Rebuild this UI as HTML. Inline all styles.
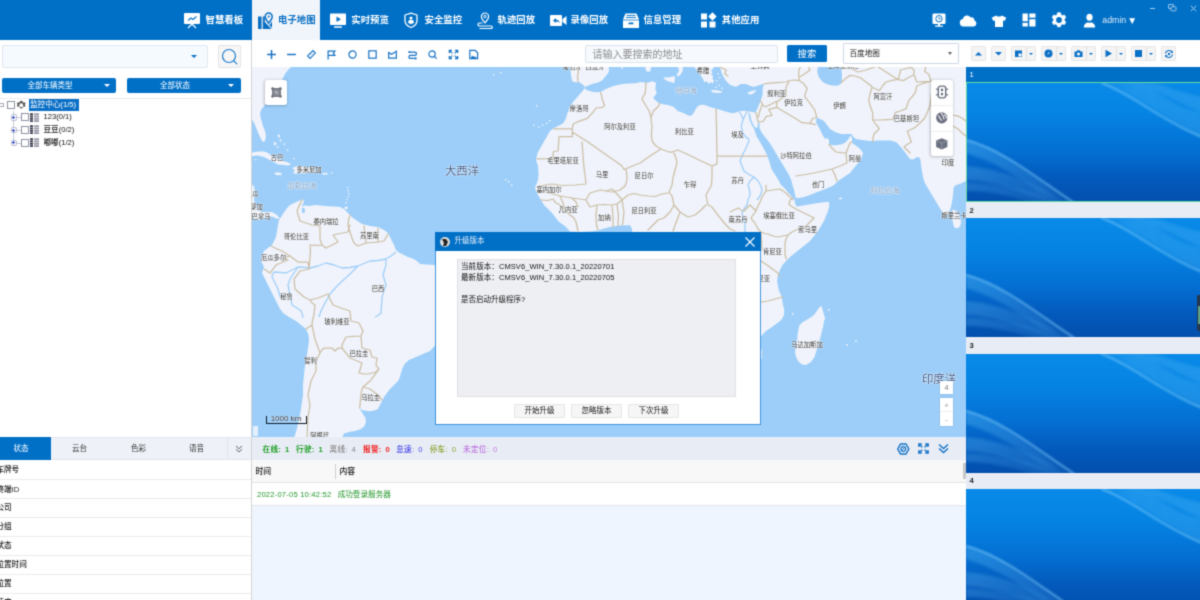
<!DOCTYPE html>
<html lang="zh-CN">
<head>
<meta charset="utf-8">
<title>CMSV6</title>
<style>
*{box-sizing:border-box;margin:0;padding:0}
html,body{width:1200px;height:600px;overflow:hidden;background:#fff}
body{font-family:"Liberation Sans","Noto Sans CJK SC",sans-serif;font-size:9.5px;color:#222;position:relative;-webkit-font-smoothing:antialiased}
.abs,#app *{position:absolute}
#app{position:absolute;left:0;top:0;width:1200px;height:600px;overflow:hidden;filter:url(#soft)}
.t{white-space:nowrap;line-height:12px;height:12px}
/* top bar */
#top{left:0;top:0;width:1200px;height:40px;background:#0070c7}
#tabact{left:252px;top:0;width:68px;height:40px;background:#f0f5fb}
.nav{top:14.4px;color:#fff;font-weight:bold;font-size:9.4px;letter-spacing:0}
.nav.on{color:#0a6fc2}
/* left */
#left{left:0;top:40px;width:251px;height:560px;background:#fff}
#lb{left:251px;top:40px;width:1px;height:560px;background:#d4d4d4}
.bbtn{top:78px;height:15px;background:#0070c7;border-radius:2px;color:#fff;font-size:7.5px;text-align:center;line-height:15px}
.tri{width:0;height:0;border-left:3px solid transparent;border-right:3px solid transparent;border-top:3.5px solid #fff}
.cb{width:8px;height:8px;border:1px solid #8e94a4;background:#fff}
.row{left:0;width:251px;height:1px;background:#ececec}
.rt{left:-3.6px;margin-top:0.9px;font-size:7.6px;color:#1a1a1a;font-weight:500}
/* map toolbar */
#mtb{left:252px;top:40px;width:714px;height:27px;background:#fff}
/* bottom */
#stat{left:252px;top:437px;width:714px;height:23px;background:#e8ecf5}
#th{left:252px;top:460px;width:714px;height:23px;background:#f8f8f8;border-bottom:1px solid #e4e4e4}
#tr{left:252px;top:483px;width:714px;height:23px;background:#fff;border-bottom:1px solid #e0e4ea}
#tb{left:252px;top:506px;width:714px;height:94px;background:#eef5fe}
/* right */
#right{left:965.5px;top:40px;width:234.5px;height:560px;background:#fff}
.vh{left:965.5px;width:234.5px;height:17px;background:#e8ecf5;color:#222;font-weight:bold;font-size:7.6px}
.vh span{left:4px;top:2.5px}
.vv{left:965.5px;width:234.5px;height:119px;overflow:hidden}
.rb{top:46px;height:15px;background:#f4f4f4;border:1px solid #e6e6e6;border-radius:1.5px}
.ml{white-space:nowrap;text-align:center;line-height:1.5;color:#333;text-shadow:0 0 1px #fff,0 0 1px #fff,0 0 2px #fff}
/* dialog */
#dlg{left:435px;top:232px;width:325.8px;height:193px;background:#fff;border:1px solid #3f93dd}
#dlgt{left:-1px;top:-1px;width:325.8px;height:19.3px;background:#0070c7}
#dlgb{left:21px;top:26px;width:278.7px;height:137.6px;background:#eeeff3;border:1px solid #e0e0e5}
.dbtn{top:171px;width:51px;height:14px;background:#f6f6f6;border:1px solid #e6e6e6;border-radius:1px;text-align:center;line-height:12px;font-size:7.5px;color:#111}
</style>
</head>
<body>
<svg width="0" height="0" style="position:absolute;left:0;top:0"><defs><filter id="soft" x="0" y="0" width="100%" height="100%" color-interpolation-filters="sRGB"><feConvolveMatrix order="3" kernelMatrix="0.0289 0.1122 0.0289 0.1122 0.4356 0.1122 0.0289 0.1122 0.0289" edgeMode="duplicate" preserveAlpha="true"/></filter></defs></svg>
<div id="app">
<!-- MAP -->
<div id="map" style="left:252px;top:67px;width:714px;height:370px;overflow:hidden;background:#9fcef9">
<svg style="left:0;top:0" width="714" height="370" viewBox="0 0 714 370">
<rect width="714" height="370" fill="#9ccef9"/>
<path fill="#f0f3fb" d="M0 0L39 0L36 3L33 7L31 11L28 17L22 25L16 33L12 39L9 43L8 47L9 52L11 59L13 64L14 69L13 74L11 75L9 72L7 68L5 63L3 58L1 54L0 53ZM0 118L2 119L3 125L2 133L4 139L6 143L10 145L20 145L25 148L28 152L24 151.5L20 149.5L14 150.5L8 152.5L3 152L0 150ZM27 153L31 147L33 144L36 140L38 138L44 135L48 133.5L50.5 132.5L52 134L51 137L49 139L53 138.5L57 139L64 138L73 139L82 139.5L88 140L92 142L95 145L98 148L101 151L104 153L110 157L118 159L126 160L132 163L136 166L139 172L142 178L144 183L147 185.5L150 187L156 190L162 192L166 195L168 197L175 197.5L182 198L193 201L203 208L208 218L210 228L206 243L200 258L193 271L184 277.5L178 284L171 287L164 290L157 293L153 296.5L150.5 301L149 306L147.5 311L146 314L142 318L138 322L135 326L132 330L130 334L129 336L127 340L126 342L122 343.5L118 344.3L114 343.8L110 343L107.5 341L109 344L111 347L113.5 351L114 355L112.5 359L109 362L103 364L97 365L92 366.5L90 371L42 371L44 365L45.5 359L46.5 354L48 348L49 342L50 335L51 328L51 318L52 308L53 298L54 293L55 288L56 281L57 274L56.5 268L54 262L49 258L44 254L37 250L31 246L27.5 241L26 238L23 232L20 226L17 220L14 214L12 210L10 206L11 203L12 200L10 196L9 192L10 188L12 184L16 181L20 178L22 174L24 170L25 164L26 158ZM318 0L714 0L714 114L710 116L706 117.5L703 118.5L701.5 121L701 128L700 135L699 140L697.5 144L695 148.5L693 148L691 146L689 143L686 138L683 133L680 128L677 123L674.5 119L672.5 115L671 110L670 104L669 98L668.5 93L667 90L664 90.5L661 92.5L658 92L655 88L652 84L648 79L644 75L638 73.6L628 73.5L618 74L610 73L604 72L601 69.5L599.5 67L594 67L590 67.2L584 65.5L578 62L575 58L572 54L568 52L564.5 50.5L564 55L566 59L568 62.5L570 67L573 72L575 71L577 73L577 76L578.5 78L584 78.3L590 77.2L594 75L596.5 72L598.5 68.5L600 71L600 76L603 78L606 80L609 83L611 86L609.5 91L606 96L602 101L598 106L592 110L586 114L582 118L576 121L568 124L563 126L558 128L552 130L546 131.3L543 130L542.5 132.5L543 136L544.5 139.5L548 139L554 138L560 137L566 136L572 135.3L577 134.8L577.3 139L576 144L574 149L572 154L569 159L566 164L562 169L558 174L553 178L548 182L543 186L538 190L534 194L530.5 198L528 203L526 208L525 214L526 219L527 224L529 228L530 232L531 238L532.3 243L532 248L530 252L528 254L524 257L520 260L517 262L514 264L511 267L509 269.5L507 274L508 280L509.8 283L509.8 291L507 295L498 313L488 333L468 351L438 353L408 313L388 263L393 213L388 183L380 164L380 162L378 158.3L368 158.5L360 159.5L352 161.5L346 163.5L338 164.5L328 165L318 164.5L314 160L310 157L306 154L303 150L300 146L296 142L292 138L289 133L286 128L284 124L283 120L284.5 117L286 113L286.5 107L286 99L284 93L285.5 86L290 78L294 71L298 64L302 61L307 58.5L311 56.5L313.5 52.5L315.5 46L318 40L321 35L324.5 31L328 27L331 23.5L332.7 21L332.7 19.6L330 17L327 15L323 15.3L320.5 14.5L319.5 11L319 8L318.5 4Z"/>
<path fill="#9ccef9" d="M50 141L52 140.5L53 143L52.5 146L50.5 146L49.8 143.5ZM332.5 20.4L334 19.4L340 17L346 15.5L350 13.5L353 10L355.5 7L357 4L356.7 -1L468 -1L468.7 3L470.5 8L472.5 11.5L474 13.7L476 16L478 17.7L481 19L484 19.7L486.5 18.5L488.7 17L494 17L497.5 18.5L500.7 19.7L504 19.3L507.3 18.3L510 17.3L512 17L511.2 19.5L510.7 21.7L510.7 27L509.7 30.5L508.7 33.7L507.3 37L506 40.3L504.5 43.5L503.3 45.7L499 44.8L495.3 44.3L491 43.8L487.3 44.3L484 45.6L480.7 46.3L476.5 45.3L472.7 44.3L468 42.8L464 41.7L457.3 39.7L453.5 38.2L450.7 37.7L447.5 38.3L445.3 39.7L443.5 42.5L442 45.5L440 48L438 49L435 47.8L432 46.3L428.5 45L425.3 43.7L423 41.3L421.3 39.7L418 38.5L414.7 37.7L411 37.2L407.3 36.3L405.5 35L404 33.7L402 32L401.5 30.3L403.5 28L404.7 25.7L403.8 23.5L403.3 21.7L403.8 19L404 16.3L402 14.8L400 14.3L397.5 15.3L394.7 15.7L391 15.2L388 15L385.5 16L382.7 16.3L376 16.6L370.7 17L366 18L361.3 19L357 20.7L353.3 22.3L350.5 24L348 25L344.5 25.3L341.3 25L337.5 24L334.7 23L333 21.6ZM496.7 45.3L498 46.5L499 52.3L501 57L503 60.5L505.3 61L505.8 57.5L506.2 54.8L507.3 55.5L507.5 59L507.8 62L510 66L512.7 69.7L515.5 73L519 78L522 83L525 88L528 93L531 98L534 103L537 108L539 112.5L540.5 118L542 123L543.2 128.5L543.3 131L542.3 132.5L540.5 131L538.5 128L536.5 126L534 123L531.5 120L529 118L527 114L524.5 110L522 106L519.5 102L517.5 95L515 88L512.5 83L510 78.5L508 75L506.3 72L504.7 69.7L503.5 66L502 61.7L499.8 58L498 54L496.8 50ZM566 -1L588.7 -1L589.5 3L590 8.3L589.8 13L589.3 16.3L587 18L584.7 18.7L580 18.5L576.7 17.7L573 16.3L570 14.3L567.5 11L566 8.3L565.3 4Z"/>
<path fill="#f0f3fb" d="M0 85.5L6 84.5L12 84.4L16 86L20 89L26 91.5L31 94L36 95.5L39 97L37 98.5L32 98L26 97.5L22 95L18 93L12 90L6 88.5L0 89ZM40 101L44 99.5L48 99L54 100L59 101.5L64 103.5L62 105.5L57 105L52 106.5L47 106L44 107L41 106L43 103.5ZM22 106L26 105.2L30 106.5L29 108.2L24 108ZM70 106L75 105.8L76.5 107.2L71 107.8ZM26 67L28 68.2L27.6 71L25.7 69.8ZM28 72L29.5 72.9L29.2 75L27.7 74.1ZM22 75L24.5 76.1L24 78.5L21.7 77.4ZM25 79L26.5 79.6L26.2 81L24.7 80.4ZM32 76L33.2 76.8L33 78.5L31.7 77.8ZM35 82L36.5 82.6L36.2 84L34.7 83.4ZM41 91L43 91.4L42.6 92.5L40.7 92.1ZM3 92L4.5 92.4L4.2 93.5L2.7 93.1ZM79 105.3L80.4 105.6L80.2 106.9L78.8 106.6ZM95 120L96.4 120.3L96.2 121.6L94.8 121.3ZM95.6 123L97 123.3L96.8 124.6L95.4 124.3ZM96.2 126L97.6 126.3L97.4 127.6L96 127.3ZM95.5 129L96.9 129.3L96.7 130.6L95.3 130.3ZM94.5 132L95.9 132.3L95.7 133.6L94.3 133.3ZM93.5 135L94.9 135.3L94.7 136.6L93.3 136.3ZM92.5 140L95.5 139.5L95.5 142L92.8 142.3ZM369 0.5L371 0.3L371.3 1.6L369.3 1.8ZM393.5 -1L398.5 -1L399 2L398 4.8L394.5 4.5L393.5 2ZM411.3 10.3L416 10.6L422.7 9L423 12L422 16.3L418.5 15L414.7 13.7L412.5 12ZM425.5 -1L430.5 -1L431 3L429.5 6L427.8 8.5L425.5 9.5L424.8 7.5L427 4L426.5 1.5ZM442 -1L462 -1L461 2L459 3L460.5 5.5L459 7L461 9L460.5 11.5L462 14L460.5 16.5L458.5 15L457 17L454.5 14L452.5 15.5L451 12L449 9L447.5 5.5L445 3L443 1ZM458.5 23.3L462 23L466 23.6L470 24.3L469.5 25.8L465 26L460.5 25.3ZM495.3 26L498 24.5L501.5 23.6L504.3 23L503 25L501 26.8L497.8 27.7ZM463.5 19.5L465 19.8L464.7 21.1L463.3 20.7ZM466.5 17.5L468 17.8L467.7 19.1L466.3 18.7ZM464 13L465.5 13.3L465.2 14.6L463.8 14.2ZM467 10L468.5 10.3L468.2 11.6L466.8 11.2ZM469.5 20.5L471 20.8L470.7 22.1L469.3 21.7ZM465.5 6L467 6.3L466.7 7.6L465.3 7.2ZM297 53L298.6 53.2L298.4 54.5L296.8 54.3ZM294 55.5L295.6 55.7L295.4 57L293.8 56.8ZM290 57.5L291.6 57.7L291.4 59L289.8 58.8ZM286 59.5L287.6 59.7L287.4 61L285.8 60.8ZM281 57.5L282.6 57.7L282.4 59L280.8 58.8ZM284 38L285.6 38.2L285.4 39.5L283.8 39.3ZM256 114L257.6 114.2L257.4 115.5L255.8 115.3ZM253 112L254.6 112.2L254.4 113.5L252.8 113.3ZM259 117.5L260.6 117.7L260.4 119L258.8 118.8ZM248 5L249.6 5.2L249.4 6.5L247.8 6.3ZM241 7L242.6 7.2L242.4 8.5L240.8 8.3ZM586.5 131L589 130.6L590.5 131.6L588 132.4ZM699.5 144.5L701.5 142.5L704 143.5L706.5 147L708.5 152L709 156.5L707.5 160L704.5 161.5L702 160L701 156L700 150ZM569.2 238.5L570.3 242L571.5 246L573.2 251.5L572 254L571.3 259L570 264L568.5 270L566.5 277L564.5 283.5L562.5 290L559 295L554 298L550 297.5L547 295L544.5 291L543 286L543.8 280L545 274L545.5 268L546.5 262L547.5 258L551 255L554.5 253L558.5 250.5L562 248L564.5 244.5L566.5 241.5ZM594.3 277L596.1 277.2L595.8 278.7L594.1 278.4ZM603.2 273.3L605 273.5L604.7 275L603 274.7ZM576 242L577.8 242.2L577.5 243.7L575.8 243.4ZM540 246L541.8 246.2L541.5 247.7L539.8 247.4Z"/>
<path fill="none" stroke="#a0cff9" stroke-width="1.3" stroke-linejoin="round" d="M144 185L139 189L134 192L126 193.5L118 194L112 196.5L106 199L98 200.5L90 201L82 198L74 196L66 199L58 201L52 200.3L46 200L40 203L34 206L28 205.3L22 205L20.5 207.5L20 210L23 216L26 222L27 226L28 230M46 200L42 206L38 212L37 215L36 218L38 228L40 238L45 241L49 244L50.5 248L51 251M106 199L102 203L98 207L92 212.5L86 218L82 222.5L78 227L75 232.5L72 238L69 244L67 250M134 192L134 198L132.5 203L131 208L132.5 213L134 218L132 224L130 230L129.5 238L129 246L126 248.5L123 250M487.3 44.5L489.5 48.5L491.3 52.3L490 56L489.3 59L490 63L491.3 67L494 70L496.7 72.3L497 74L494 81L490 89L488 94L490 99L492 104L497 107.5L502 110L498 114L496 118L497.5 123L498 128L496 133L495 138L492 142L490 146L491.5 152L493 158L493 165M495.3 44.5L493 48.5L491.3 52.3M502 110L506 114L509 119L510 124L508 129L505 133"/>
<path fill="none" stroke="#cbbfa5" stroke-width="1.25" stroke-linejoin="round" stroke-linecap="round" d="M326 -1L326.3 5L325.5 10L326 14.5M348.7 25.4L350.7 33.7L352.7 38.3L350.7 40.3L344 41L340.7 45.7L334.7 51.7L326.7 54.3L321.3 57L320.3 61.7M302 61.9L320.3 61.9L320.3 69.5L307 69.5L306.5 77L306 84L301.5 84.5L301 88L302 91.6L285 91.8M320.3 65L328 70L336 75L348 83.5L358 90.5L366 96L370 99L372 102.5L378 100L388 96L398 89L409 82M330 75L331 88L332 101L333.5 112L334 117L323 118L310 118.5L300 117L293 118L286 120M374 102.5L375 109L374.5 115L373 119L368 123L360 125L354 124M394 15.7L393.3 25.7L390 31.7L393.3 37.7L397.3 44.3L398.7 49.7L400 59L399.3 69.7L400.7 75L404 79L409 82L414 84L419 85.3L423 84L426 83M407.3 36.3L406.7 39L401.3 44.3L399.3 49.7M426 83L438 88.5L448 93.5L460 99M464 42L464.5 58L464.7 75L465 89M460 99L462 98.2L465 97L465 89L478 89L493 89L508 89L515 89M422 86L424 91L425 96L423 103L421 111L420 118L417 125L420 129M460 99L460 109L459.5 118L454 128L456 138L460 140L466 148L473 157L478 162L483 164M286 124.5L294 125L301 127L308 129L314 130L320 131L324 135L326 140M289 133L296 133.5L301 132L304 136L308 138L310 142M308 129L311 136L313 143L318 148L322 151L324 155L326 164M334 133L338 126L348 123L354 124L360 122L366 128L370 133L365 137L360 138L352 137.5L345 138L338 140L334 133M320 131L328 132L334 133M345 138L344 148L344.5 158L346 163M360 138L361 149L361 160M365 137L366.5 148L366 159M370 133L372 145L370.5 158M370 133L376 128L382 126.5L388 128L396 129L403 129.5L410 127L416 126M420 129L422 138L418 145L412 151L406 153L401 158L396 163M422 138L428 145L425 153L421 164M428 145L436 150L443 148L448 144L454 138M514 118L514 124L521 123L528 122L534 126L538 130L541 132.5M514 124L510 130L508 135L505 141L504 144L501 148L499 151L502 155L504 158L506 162L509 165L513 166.5L516 167L521 169L526 170L531 169L536 168L540 165L544 163L548 162L552 161L557 156L562 151L553 146.5L544 142L539 139L537 137L538 133L540 132M478 145L482 143L486 141L489 143L492 144L495 141L498 138L501 141L504 144M536 168L534 172L533 176L533 183L533 188L534.5 192M509 194L515 198L521 202.5L526 206L527 209M509 235L516 234L523 232L531 230M509 165L509.5 173L510 183M512 17L515.3 16.3L524.7 15.7L534 15L538 13.5L542 13L547.3 13.7M548.7 -1L547 3L546.7 5.7L547 10L547.3 13.7L551.3 16.3L555.3 21.7L553.5 26L552.7 29.7L558 36.3L562.7 43L564.7 50M536.7 15L534 20.3L534 28.3L524.7 35L524.7 40.3M510 37.7L514 39.7L524.7 34.3M524.7 40.3L516.7 42.3L520 48.3L514 49.7L511.3 54.3L506.7 55M524.7 40.3L531.3 44.3L544.7 52.3L550 55.7L558 56.3L560.7 51.5L564.5 50.5M558 56.3L563.5 57.7M504 45.5L505 50L506.2 55M508 33L510.5 37L509 41L507.5 45L506.5 50M544 109L553 107.5L562 106L571 104L580 102L588 99L595 96L594.5 91L594 86L589 85.6L584 85L580 81L577 77.5M580 102L583 108L585 114M594 86L596 81L598 76L600 75M589.3 15.5L593 12L598 8.3L603 9L608.7 11L614 15L619.3 19L620 20.3M620 20.3L618 27L616.7 33.7L618.5 40L620.7 45.7L620.7 53L624 57.5L627.3 61.7L624.5 64.5L622 67L621 71L620.7 75M620 20.3L627.3 23.7L630.5 19L634 15L640 13.3L646 12.3L651.3 13.7L656.5 10.5L662 7.7L663.5 11.5L664.7 15L671 14.7L678 14.3M678 14.3L671 16.5L664.7 19L663.3 25.7L660 30L656.7 33.7L654 41.7L648.5 44L643.3 45.7L640.7 52.3L630 52.8L620.7 53M679 31L678 39L675.5 45L672.7 51L668 56L663.3 60.3L659 62.5L655.3 64.3L657.5 70L659.3 75L655 77.5L652 80L655 83L658 86M624.7 -1L634 5L643.3 11L646 12.3L647.5 7.5L648.7 3L654 1.5L659.3 0.3L662 3L662 7.7M674 -1L672.7 4.3L674.5 6L676.7 7L678 11L679.3 15L680.5 20L679.5 26L679 31M701.3 48.3L704.5 48.7L707.3 49.7L710.5 51.5L714 54M701 59L706 62L710 66L714 69M598 -1L602 3L606 5L614 3L623 0M556 -1L558 3L554 6L551 8L547 10M468 0L474 3L473 7L476 9M50 133L47.5 138L45 144L46.5 149L48 154L54 156L60 158L64 158.5L68 159L68 165L68 172L69 175L70 178M70 178L64 178.3L58 178L58.5 184L58 190L57.5 196L57 202M70 178L74 181L80 178L86 175L83.5 171.5L81 168L88 166.5L96 165L97 161L98 158M98 148L96.5 153L96 158L97 162L98 165L100 171L102 176L106 179L110 177.5L114 176L120 175.5L126 175L132 174L134 170.5L136 167M112 159L113 167L114 176M126 161L126 168L126 175M19 179L24 181.5L30 184L34 186.5L38 189L32 191L36 193L30 195.5L24 198L21 202L18 206L15 204L12 202M38 189L42 192L46 195L51 195L56 195L57 202L52.5 203L48 204L45 208L42 212L42.5 217L43 222L47.5 226L52 230L55 231.5L58 233L60 236L63 238L62.5 243L62 248L60.5 253L60 258L57 260L54 262M58 233L66 231L76 227L78 232L81 238L89 241L98 244L98.5 249L99 254L103 255L107 256L109 260L111 264L110 266.5L109 269M60 258L61.5 265L63 272L65.5 279L68 286L70 283L72 281L76 281L80 281L83 284L86 281L90 281L90 278L92 274L94 270L101 269.3L109 269M68 286L66 290L64 294L64 299L64 304L61.5 309L59 314L57.5 321L56 328L57 333L58 338L57 344L56 350L55.5 360L55 371M90 281L94 286L98 291L104 293.5L110 296L108.5 301L107 306L111.5 306.8L116 307L120 306L124 305L125.5 303.5L127 302L125.5 300L124 298L124.5 294.5L125 291L122.5 290.5L120 290L119 286.5L118 283L114 282L110 281L109.5 275L109 269M127 302L122.5 308L118 314L114.5 317L111 320L114.5 321L118 322L122 325L126 328L128 330.5L130 333M111 320L110 323L109 326L108.5 332L108 338L107.5 341"/>
</svg>
<div class="ml" style="left:300.6px;top:-5.2px;width:38.9px;font-size:6.3px;color:#333;">葡萄牙</div>
<div class="ml" style="left:323.6px;top:-5.2px;width:38.9px;font-size:6.3px;color:#333;">西班牙</div>
<div class="ml" style="left:434.7px;top:-0.7px;width:32.6px;font-size:6.3px;color:#333;">希腊</div>
<div class="ml" style="left:307.6px;top:36.9px;width:38.9px;font-size:6.3px;color:#333;">摩洛哥</div>
<div class="ml" style="left:342.2px;top:55.3px;width:51.5px;font-size:6.3px;color:#333;">阿尔及利亚</div>
<div class="ml" style="left:412.9px;top:60.3px;width:38.9px;font-size:6.3px;color:#333;">利比亚</div>
<div class="ml" style="left:285.2px;top:88.7px;width:51.5px;font-size:6.3px;color:#333;">毛里塔尼亚</div>
<div class="ml" style="left:333.7px;top:102.7px;width:32.6px;font-size:6.3px;color:#333;">马里</div>
<div class="ml" style="left:372.6px;top:103.7px;width:38.9px;font-size:6.3px;color:#333;">尼日尔</div>
<div class="ml" style="left:421.7px;top:112.9px;width:32.6px;font-size:6.3px;color:#333;">乍得</div>
<div class="ml" style="left:505.2px;top:21.9px;width:38.9px;font-size:6.3px;color:#333;">叙利亚</div>
<div class="ml" style="left:522.1px;top:30.7px;width:38.9px;font-size:6.3px;color:#333;">伊拉克</div>
<div class="ml" style="left:571.3px;top:34.3px;width:32.6px;font-size:6.3px;color:#333;">伊朗</div>
<div class="ml" style="left:611.5px;top:24.7px;width:38.9px;font-size:6.3px;color:#333;">阿富汗</div>
<div class="ml" style="left:631.8px;top:46.7px;width:45.2px;font-size:6.3px;color:#333;">巴基斯坦</div>
<div class="ml" style="left:469.3px;top:63.3px;width:32.6px;font-size:6.3px;color:#333;">埃及</div>
<div class="ml" style="left:518.2px;top:83.9px;width:51.5px;font-size:6.3px;color:#333;">沙特阿拉伯</div>
<div class="ml" style="left:586.7px;top:87.3px;width:32.6px;font-size:6.3px;color:#333;">阿曼</div>
<div class="ml" style="left:679.7px;top:90.7px;width:32.6px;font-size:6.3px;color:#333;">印度</div>
<div class="ml" style="left:469.3px;top:109.3px;width:32.6px;font-size:6.3px;color:#333;">苏丹</div>
<div class="ml" style="left:549.7px;top:113.3px;width:32.6px;font-size:6.3px;color:#333;">也门</div>
<div class="ml" style="left:565.2px;top:-5.7px;width:51.5px;font-size:6.3px;color:#333;">土库曼斯坦</div>
<div class="ml" style="left:488.6px;top:-6.2px;width:38.9px;font-size:6.3px;color:#333;">土耳其</div>
<div class="ml" style="left:8.7px;top:86.3px;width:32.6px;font-size:6.3px;color:#333;">古巴</div>
<div class="ml" style="left:34.4px;top:97.9px;width:45.2px;font-size:6.3px;color:#333;">多米尼加</div>
<div class="ml" style="left:-28.6px;top:122.3px;width:45.2px;font-size:6.3px;color:#333;">尼加拉瓜</div>
<div class="ml" style="left:-30.8px;top:135.3px;width:51.5px;font-size:6.3px;color:#333;">哥斯达黎加</div>
<div class="ml" style="left:-10.4px;top:144.9px;width:38.9px;font-size:6.3px;color:#333;">巴拿马</div>
<div class="ml" style="left:51.4px;top:150.3px;width:45.2px;font-size:6.3px;color:#333;">委内瑞拉</div>
<div class="ml" style="left:21.8px;top:165.3px;width:45.2px;font-size:6.3px;color:#333;">哥伦比亚</div>
<div class="ml" style="left:97.9px;top:164.3px;width:38.9px;font-size:6.3px;color:#333;">苏里南</div>
<div class="ml" style="left:-1.0px;top:185.9px;width:45.2px;font-size:6.3px;color:#333;">厄瓜多尔</div>
<div class="ml" style="left:18.3px;top:224.9px;width:32.6px;font-size:6.3px;color:#333;">秘鲁</div>
<div class="ml" style="left:109.7px;top:217.3px;width:32.6px;font-size:6.3px;color:#333;">巴西</div>
<div class="ml" style="left:274.4px;top:117.9px;width:45.2px;font-size:6.3px;color:#333;">塞内加尔</div>
<div class="ml" style="left:296.6px;top:138.3px;width:38.9px;font-size:6.3px;color:#333;">几内亚</div>
<div class="ml" style="left:336.1px;top:145.9px;width:32.6px;font-size:6.3px;color:#333;">加纳</div>
<div class="ml" style="left:369.4px;top:139.3px;width:45.2px;font-size:6.3px;color:#333;">尼日利亚</div>
<div class="ml" style="left:501.2px;top:143.9px;width:51.5px;font-size:6.3px;color:#333;">埃塞俄比亚</div>
<div class="ml" style="left:536.1px;top:158.3px;width:38.9px;font-size:6.3px;color:#333;">索马里</div>
<div class="ml" style="left:500.9px;top:180.3px;width:38.9px;font-size:6.3px;color:#333;">肯尼亚</div>
<div class="ml" style="left:466.6px;top:147.7px;width:38.9px;font-size:6.3px;color:#333;">南苏丹</div>
<div class="ml" style="left:482.9px;top:206.7px;width:45.2px;font-size:6.3px;color:#333;">坦桑尼亚</div>
<div class="ml" style="left:679.4px;top:144.3px;width:45.2px;font-size:6.3px;color:#333;">斯里兰卡</div>
<div class="ml" style="left:62.4px;top:250.3px;width:45.2px;font-size:6.3px;color:#333;">玻利维亚</div>
<div class="ml" style="left:87.5px;top:282.3px;width:38.9px;font-size:6.3px;color:#333;">巴拉圭</div>
<div class="ml" style="left:42.3px;top:289.3px;width:32.6px;font-size:6.3px;color:#333;">智利</div>
<div class="ml" style="left:99.2px;top:326.3px;width:38.9px;font-size:6.3px;color:#333;">乌拉圭</div>
<div class="ml" style="left:48.2px;top:363.9px;width:38.9px;font-size:6.3px;color:#333;">阿根廷</div>
<div class="ml" style="left:529.2px;top:272.9px;width:51.5px;font-size:6.3px;color:#333;">马达加斯加</div>
<div class="ml" style="left:413.2px;top:18.9px;width:41.6px;font-size:7.2px;color:#7f9fc4;">地中海</div>
<div class="ml" style="left:608.6px;top:118.6px;width:48.8px;font-size:7.2px;color:#7f9fc4;">阿拉伯海</div>
<div class="ml" style="left:25.6px;top:113.6px;width:48.8px;font-size:7.2px;color:#7f9fc4;">加勒比海</div>
<div class="ml" style="left:182.9px;top:96.0px;width:54.2px;font-size:11.4px;color:#3a5585;">大西洋</div>
<div class="ml" style="left:659.9px;top:303.8px;width:54.2px;font-size:11.4px;color:#3a5585;">印度洋</div>
<div style="left:13.300px;top:12.700px;width:22px;height:25.300px;background:#fff;border-radius:2.500px;box-shadow:-0.500px 0.500px 3px rgba(0,0,0,.22)"></div>
<svg style="left:18.800px;top:19.800px" width="11" height="11" viewBox="0 0 10 10"><rect x="1.500" y="1.500" width="7" height="7" fill="#8a8d96" stroke="#70737c" stroke-width="1"/><circle cx="1.500" cy="1.500" r="1.300" fill="#6a6d76"/><circle cx="8.500" cy="1.500" r="1.300" fill="#6a6d76"/><circle cx="1.500" cy="8.500" r="1.300" fill="#6a6d76"/><circle cx="8.500" cy="8.500" r="1.300" fill="#6a6d76"/><path d="M3.800 4l2.400 1.800" stroke="#e8e8ec" stroke-width="0.900"/></svg>
<div style="left:679px;top:12.500px;width:22px;height:76.500px;background:#fff;border-radius:2.500px;box-shadow:-0.500px 0.500px 3px rgba(0,0,0,.22)"></div>
<div style="left:679px;top:37.500px;width:22px;height:1px;background:#eceef2"></div><div style="left:679px;top:64px;width:22px;height:1px;background:#eceef2"></div>
<svg style="left:683px;top:18px" width="14" height="14" viewBox="0 0 12 12"><rect x="2.800" y="1" width="6.400" height="10" rx="2" fill="#fff" stroke="#6b7080" stroke-width="1.200"/><circle cx="6" cy="4.200" r="1.100" fill="#6b7080"/><circle cx="6" cy="7.800" r="1.100" fill="#6b7080"/><path d="M0.800 3.200l2 0.800M0.800 8.800l2-0.800M11.200 3.200l-2 0.800M11.200 8.800l-2-0.800" stroke="#6b7080" stroke-width="1"/></svg>
<svg style="left:683.300px;top:43.800px" width="13.500" height="13.500" viewBox="0 0 12 12"><circle cx="6" cy="6" r="5" fill="#6b7080"/><path d="M2.500 4c1.500 0 2 3.500 3.500 4.500M5.500 1.500c1 2 2.500 3 2.500 6M8.500 2.500c0.500 2 1.500 2.500 2 4" stroke="#fff" stroke-width="0.900" fill="none"/></svg>
<svg style="left:683.300px;top:70px" width="13.500" height="13.500" viewBox="0 0 12 12"><path d="M6 1l5 2.200v5.600L6 11 1 8.800V3.200z" fill="#6b7080"/><path d="M1 3.200L6 5.400l5-2.200M6 5.400V11" stroke="#9aa0ad" stroke-width="0.700" fill="none"/></svg>
<div style="left:688px;top:313.500px;width:13px;height:13px;background:#fff;box-shadow:0 0 2px rgba(0,0,0,.15)"></div>
<div class="ml" style="left:688px;top:316px;width:13px;font-size:7px;color:#777">4</div>
<div style="left:688px;top:330.500px;width:13px;height:28px;background:#fff;box-shadow:0 0 2px rgba(0,0,0,.15)"></div>
<div style="left:688px;top:344px;width:13px;height:1px;background:#eceef2"></div>
<div class="ml" style="left:688px;top:333px;width:13px;font-size:8px;color:#999">+</div>
<div class="ml" style="left:688px;top:347px;width:13px;font-size:8px;color:#999">-</div>
<div class="ml" style="left:13.500px;top:346px;width:41px;font-size:8px;color:#1a2233;text-shadow:0 0 1px #fff,0 0 1px #fff">1000 km</div>
<div style="left:13.500px;top:349px;width:41px;height:8px;border:1.200px solid #111a2a;border-top:0"></div>
<div style="left:1px;top:359px;width:5px;height:10px;background:#e3f0fd"></div>
</div>

<!-- TOP BAR -->
<div id="top"></div>
<div id="tabact"></div>
<svg style="left:183.4px;top:12.2px" width="18" height="17" viewBox="0 0 18 17"><rect x="1" y="1" width="16" height="11" rx="1" fill="#fff"/><path d="M5 8.500l3-2.500 2 1.500 3.500-3" stroke="#0070c7" stroke-width="1.1" fill="none"/><path d="M9 12l-4 4M9 12l4 4" stroke="#fff" stroke-width="1.2" fill="none"/></svg>
<div class="t nav" style="left:205.6px">智慧看板</div>
<svg style="left:256.0px;top:12.2px" width="18" height="17" viewBox="0 0 18 17"><path d="M2 4.500h3.600v12.500H2z" fill="#0a6fc2"/><path d="M6.800 4.500h2v5.500l6.700 7H6.800z" fill="#0a6fc2"/><path d="M10.300 10.200l5.700 5.800V9.500l-2.500 3.500z" fill="#0a6fc2"/><path d="M12.700 1a3.500 3.500 0 0 1 3.500 3.500c0 2.500-3.500 6.500-3.500 6.500s-3.500-4-3.500-6.500A3.500 3.500 0 0 1 12.700 1z" fill="#f0f5fb" stroke="#0a6fc2" stroke-width="1.500"/><circle cx="12.700" cy="4.500" r="1" fill="#0a6fc2"/></svg>
<div class="t nav on" style="left:278.1px">电子地图</div>
<svg style="left:329.3px;top:12.2px" width="18" height="17" viewBox="0 0 18 17"><rect x="1" y="1.500" width="16" height="11.500" rx="0.800" fill="#fff"/><path d="M7.500 4.500l4.500 2.800-4.500 2.800z" fill="#0070c7"/><rect x="5" y="14.300" width="8" height="1.500" rx="0.500" fill="#fff"/></svg>
<div class="t nav" style="left:351.3px">实时预览</div>
<svg style="left:402.5px;top:12.2px" width="18" height="17" viewBox="0 0 18 17"><path d="M8 1.200L14 3v5.500c0 3.500-3 5.800-6 7-3-1.200-6-3.500-6-7V3z" fill="none" stroke="#fff" stroke-width="1.300" stroke-linejoin="round"/><circle cx="8" cy="6" r="1.600" fill="#fff"/><path d="M5 10.800a3 3 0 0 1 6 0l-3 1.500z" fill="#fff"/></svg>
<div class="t nav" style="left:424.5px">安全监控</div>
<svg style="left:475.9px;top:12.2px" width="18" height="17" viewBox="0 0 18 17"><path d="M9 1a3.600 3.600 0 0 1 3.600 3.600c0 2.400-3.600 6.200-3.600 6.200S5.400 7 5.400 4.600A3.600 3.600 0 0 1 9 1z" fill="none" stroke="#fff" stroke-width="1.200"/><circle cx="9" cy="4.600" r="1.200" fill="none" stroke="#fff" stroke-width="1"/><path d="M6 11H3.500a1.500 1.500 0 0 0 0 3H15a1.300 1.300 0 0 1 0 2.600H4" fill="none" stroke="#fff" stroke-width="1.200" stroke-linecap="round"/></svg>
<div class="t nav" style="left:497.5px">轨迹回放</div>
<svg style="left:548.7px;top:12.2px" width="18" height="17" viewBox="0 0 18 17"><rect x="1" y="3" width="12" height="11" rx="1" fill="#fff"/><path d="M13.500 7l4-3v9l-4-3z" fill="#fff"/><path d="M4 8.500l3-2.500v1.700c2 0 3.500 1 3.500 3.300-0.800-1.200-2-1.600-3.500-1.600V11z" fill="#0070c7"/></svg>
<div class="t nav" style="left:570.5px">录像回放</div>
<svg style="left:621.7px;top:12.2px" width="18" height="17" viewBox="0 0 18 17"><path d="M3.500 1.500h11l2.500 6v8.500H1V7.500z" fill="#fff"/><path d="M4.500 3.500h9M4 5.500h10" stroke="#0070c7" stroke-width="0.900"/><path d="M1 8h16" stroke="#0070c7" stroke-width="0.800"/><rect x="6.500" y="10.500" width="5" height="1.800" rx="0.600" fill="#0070c7"/></svg>
<div class="t nav" style="left:643.5px">信息管理</div>
<svg style="left:699.7px;top:12.2px" width="18" height="17" viewBox="0 0 18 17"><rect x="1" y="1.500" width="6" height="6" fill="#fff"/><rect x="1" y="9.500" width="6" height="6" fill="#fff"/><rect x="9.500" y="9.500" width="6" height="6" fill="#fff"/><path d="M12.500 0.300l4.200 4.200-4.200 4.200-4.200-4.200z" fill="#fff"/></svg>
<div class="t nav" style="left:721.8px">其他应用</div>
<svg style="left:930.5px;top:12.3px" width="16" height="16" viewBox="0 0 16 16"><rect x="1.500" y="1.500" width="13" height="10.500" rx="1.200" fill="#fff"/><circle cx="8" cy="6.700" r="3.200" fill="none" stroke="#0070c7" stroke-width="1"/><path d="M8 5v1.900h1.600" stroke="#0070c7" stroke-width="0.900" fill="none"/><rect x="4" y="13.400" width="8" height="1.400" rx="0.500" fill="#fff"/><rect x="7" y="11.500" width="2" height="2.500" fill="#fff"/></svg>
<svg style="left:959.3px;top:14.3px" width="19" height="13" viewBox="0 0 19 13"><path d="M4.300 12.500a3.800 3.800 0 0 1-0.500-7.500 4.300 4.300 0 0 1 7.700-1.800 3.600 3.600 0 0 1 4 3.200 3.200 3.200 0 0 1-0.800 6.100z" fill="#fff"/></svg>
<svg style="left:990.8px;top:13.6px" width="16" height="14" viewBox="0 0 16 14"><path d="M5 1.500c1 1.300 5 1.300 6 0l4.300 2.300-1.700 3.300-1.600-0.700v6.600H4V6.400l-1.600 0.700L0.700 3.800z" fill="#fff"/></svg>
<svg style="left:1022.0px;top:13.3px" width="14" height="14" viewBox="0 0 14 14"><rect x="0.500" y="0.500" width="5.300" height="7.800" fill="#fff"/><rect x="7.300" y="0.500" width="6.200" height="4.200" fill="#fff"/><rect x="0.500" y="9.800" width="5.300" height="3.700" fill="#fff"/><rect x="7.300" y="6.200" width="6.200" height="7.300" fill="#fff"/></svg>
<svg style="left:1051.0px;top:12.4px" width="16" height="16" viewBox="0 0 16 16"><path d="M6.600 0.800h2.800l0.500 2 1.500 0.900 2-0.600 1.400 2.400-1.500 1.400v1.800l1.500 1.400-1.400 2.400-2-0.600-1.500 0.900-0.500 2H6.600l-0.500-2-1.500-0.900-2 0.600-1.400-2.400 1.500-1.400V6.900L1.200 5.500l1.400-2.400 2 0.600 1.500-0.900z" fill="#fff" stroke="#fff" stroke-width="0.800" stroke-linejoin="round"/><circle cx="8" cy="8" r="2.900" fill="#0070c7"/></svg>
<svg style="left:1083.0px;top:12.8px" width="13" height="15" viewBox="0 0 13 15"><ellipse cx="6.500" cy="4.300" rx="3.100" ry="3.500" fill="#fff"/><path d="M0.800 14.500c0-3 1.800-4.600 4.200-5.200l1.500 0.800 1.500-0.800c2.400 0.600 4.200 2.200 4.200 5.200z" fill="#fff"/></svg>
<div class="t" style="left:1102.300px;top:13.800px;color:#d8e8f7;font-size:8.800px">admin <span style="position:static;color:#fff;font-size:7.600px;margin-left:0.500px;font-family:'DejaVu Sans',sans-serif">▼</span></div>
<div style="left:1149.800px;top:7.800px;width:4.800px;height:1px;background:#a9cdec"></div>
<svg style="left:1168px;top:4px" width="9" height="8" viewBox="0 0 9 8"><rect x="0.500" y="0.500" width="5" height="4" rx="0.500" fill="none" stroke="#a9cdec" stroke-width="0.900"/><rect x="3" y="2.800" width="5" height="4" rx="0.500" fill="#0070c7" stroke="#a9cdec" stroke-width="0.900"/></svg>
<svg style="left:1189.500px;top:4.800px" width="7" height="7" viewBox="0 0 7 7"><path d="M0.800 0.800l5.400 5.400M6.200 0.800l-5.400 5.400" stroke="#b4d4ef" stroke-width="0.900"/></svg>

<!-- LEFT PANEL -->
<div id="left"></div>
<div id="lb"></div>
<div style="left:2px;top:45px;width:206px;height:23px;background:#f5faff;border:1px solid #dfe6ee;border-radius:2px"></div>
<div class="tri" style="left:191px;top:55px;border-top-color:#0a6fc2"></div>
<div style="left:218px;top:45px;width:23px;height:23px;background:#f6f6f6;border:1px solid #e4e4e4;border-radius:2px"></div>
<svg style="left:218px;top:45px" width="23" height="23" viewBox="0 0 23 23"><circle cx="11" cy="11" r="6.5" fill="none" stroke="#1c7bcb" stroke-width="1.2"/><path d="M15.8 15.8L18.8 18.8" stroke="#1c7bcb" stroke-width="1.2" stroke-linecap="round"/></svg>
<div class="bbtn" style="left:2px;width:114px"><span style="position:static;margin-right:18px">全部车辆类型</span></div>
<div class="tri" style="left:104px;top:84px"></div>
<div class="bbtn" style="left:127px;width:114px"><span style="position:static;margin-right:18px">全部状态</span></div>
<div class="tri" style="left:228px;top:84px"></div>
<div class="row" style="top:98px"></div>
<div style="left:0;top:103px;width:4px;height:4px;border:1px solid #aab;border-left:0;background:#fff"></div>
<div class="cb" style="left:7px;top:101px"></div>
<svg style="left:16.1px;top:99.5px" width="10.5" height="10.5" viewBox="0 0 16 16"><path d="M8 1.200l1.700 0.300 0.500 1.700 1.600 0.900 1.700-0.500 1.100 1.400-0.900 1.500v1l0.900 1.500-1.100 1.400-1.700-0.500-1.600 0.900-0.500 1.700-1.700 0.300-1.700-0.300-0.500-1.700-1.600-0.900-1.700 0.500-1.100-1.400 0.900-1.500v-1L1.400 5l1.100-1.400 1.700 0.500 1.600-0.900 0.500-1.700z" fill="#555"/><circle cx="8" cy="8" r="3" fill="#fff"/></svg>
<div style="left:29px;top:99px;width:50px;height:12px;background:#0a6fc6"></div>
<div class="t" style="left:30px;top:99px;color:#fff;font-size:7.6px">监控中心(1/5)</div>
<div style="left:13px;top:111px;width:1px;height:32px;background:#c8ccd8"></div>
<div style="left:10.500px;top:114.3px;width:6.500px;height:6.500px;border:1px solid #b4b8cc;border-radius:1.500px;background:#f2f3fa"></div>
<div style="left:12.300px;top:117.1px;width:3px;height:1px;background:#3a50c8"></div>
<div style="left:13.300px;top:116.1px;width:1px;height:3px;background:#3a50c8"></div>
<div style="left:16.500px;top:117.3px;width:4px;height:1px;background:#c8ccd8"></div>
<div class="cb" style="left:20.500px;top:113.3px"></div>
<svg style="left:30.0px;top:112.8px" width="9" height="9" viewBox="0 0 9 9"><rect x="0" y="0.300" width="3" height="1.800" fill="#334"/><rect x="0" y="2.600" width="3" height="1.800" fill="#334"/><rect x="0" y="4.900" width="3" height="1.800" fill="#334"/><rect x="0" y="7.200" width="3" height="1.800" fill="#446"/><rect x="4" y="0.300" width="5" height="1.800" fill="#99a"/><rect x="4" y="2.600" width="5" height="1.800" fill="#99a"/><rect x="4" y="4.900" width="5" height="1.800" fill="#99a"/><rect x="4" y="7.200" width="5" height="1.800" fill="#99a"/></svg>
<div class="t" style="left:43.500px;top:111.3px;font-size:7.6px;color:#111;font-weight:500">123(0/1)</div>
<div style="left:10.500px;top:126.9px;width:6.500px;height:6.500px;border:1px solid #b4b8cc;border-radius:1.500px;background:#f2f3fa"></div>
<div style="left:12.300px;top:129.8px;width:3px;height:1px;background:#3a50c8"></div>
<div style="left:13.300px;top:128.8px;width:1px;height:3px;background:#3a50c8"></div>
<div style="left:16.500px;top:129.9px;width:4px;height:1px;background:#c8ccd8"></div>
<div class="cb" style="left:20.500px;top:125.9px"></div>
<svg style="left:30.0px;top:125.4px" width="9" height="9" viewBox="0 0 9 9"><rect x="0" y="0.300" width="3" height="1.800" fill="#334"/><rect x="0" y="2.600" width="3" height="1.800" fill="#334"/><rect x="0" y="4.900" width="3" height="1.800" fill="#334"/><rect x="0" y="7.200" width="3" height="1.800" fill="#446"/><rect x="4" y="0.300" width="5" height="1.800" fill="#99a"/><rect x="4" y="2.600" width="5" height="1.800" fill="#99a"/><rect x="4" y="4.900" width="5" height="1.800" fill="#99a"/><rect x="4" y="7.200" width="5" height="1.800" fill="#99a"/></svg>
<div class="t" style="left:43.500px;top:123.9px;font-size:7.6px;color:#111;font-weight:500">豆豆(0/2)</div>
<div style="left:10.500px;top:139.6px;width:6.500px;height:6.500px;border:1px solid #b4b8cc;border-radius:1.500px;background:#f2f3fa"></div>
<div style="left:12.300px;top:142.4px;width:3px;height:1px;background:#3a50c8"></div>
<div style="left:13.300px;top:141.4px;width:1px;height:3px;background:#3a50c8"></div>
<div style="left:16.500px;top:142.6px;width:4px;height:1px;background:#c8ccd8"></div>
<div class="cb" style="left:20.500px;top:138.6px"></div>
<svg style="left:30.0px;top:138.1px" width="9" height="9" viewBox="0 0 9 9"><rect x="0" y="0.300" width="3" height="1.800" fill="#334"/><rect x="0" y="2.600" width="3" height="1.800" fill="#334"/><rect x="0" y="4.900" width="3" height="1.800" fill="#334"/><rect x="0" y="7.200" width="3" height="1.800" fill="#446"/><rect x="4" y="0.300" width="5" height="1.800" fill="#99a"/><rect x="4" y="2.600" width="5" height="1.800" fill="#99a"/><rect x="4" y="4.900" width="5" height="1.800" fill="#99a"/><rect x="4" y="7.200" width="5" height="1.800" fill="#99a"/></svg>
<div class="t" style="left:43.500px;top:136.6px;font-size:7.6px;color:#111;font-weight:500">嘟嘟(1/2)</div>
<div style="left:0;top:437px;width:251px;height:23px;background:#eef2f8;border-top:1px solid #e4e8ee;border-bottom:1px solid #e0e4ea"></div>
<div style="left:0;top:437px;width:51px;height:23px;background:#0070c7"></div>
<div class="t" style="left:1px;width:40px;text-align:center;top:442.500px;color:#fff;font-size:7.5px">状态</div>
<div class="t" style="left:59.5px;width:40px;text-align:center;top:442.500px;color:#333;font-size:7.5px">云台</div>
<div class="t" style="left:118.5px;width:40px;text-align:center;top:442.500px;color:#333;font-size:7.5px">色彩</div>
<div class="t" style="left:176.5px;width:40px;text-align:center;top:442.500px;color:#333;font-size:7.5px">语音</div>
<div style="left:227px;top:438px;width:1px;height:21px;background:#dfe3ea"></div>
<svg style="left:235.0px;top:444.5px" width="8" height="8" viewBox="0 0 8 8"><path d="M1 1l3 2.800L7 1M1 4.200l3 2.800 3-2.800" fill="none" stroke="#555" stroke-width="0.900"/></svg>
<div class="t rt" style="top:463.5px">车牌号</div>
<div class="t rt" style="top:482.7px">终端ID</div>
<div class="t rt" style="top:501.6px">公司</div>
<div class="t rt" style="top:520.5px">分组</div>
<div class="t rt" style="top:539.5px">状态</div>
<div class="t rt" style="top:558.5px">位置时间</div>
<div class="t rt" style="top:577.5px">位置</div>
<div class="t rt" style="top:596.5px">速度</div>
<div class="row" style="top:478.5px"></div>
<div class="row" style="top:497.7px"></div>
<div class="row" style="top:516.8px"></div>
<div class="row" style="top:535.8px"></div>
<div class="row" style="top:554.8px"></div>
<div class="row" style="top:573.8px"></div>
<div class="row" style="top:592.8px"></div>

<!-- MAP TOOLBAR -->
<div id="mtb"></div>
<svg style="left:265.8px;top:48.5px" width="11" height="11" viewBox="0 0 12 12"><path d="M6 1.2v9.6M1.2 6h9.6" stroke="#1470c4" fill="none" stroke-width="1.6"/></svg>
<svg style="left:286.1px;top:48.5px" width="11" height="11" viewBox="0 0 12 12"><path d="M1.2 6h9.6" stroke="#1470c4" fill="none" stroke-width="1.6"/></svg>
<svg style="left:306.2px;top:48.5px" width="11" height="11" viewBox="0 0 12 12"><path d="M1.8 7.6l5.800-5.800 2.600 2.600-5.800 5.800z" stroke="#1470c4" fill="none" stroke-width="1.2"/><path d="M6.3 3.900l1 1M4.800 5.400l1 1" stroke="#1470c4" fill="none" stroke-width="0.8"/></svg>
<svg style="left:326.3px;top:48.5px" width="11" height="11" viewBox="0 0 12 12"><path d="M2.3 1.500v10M2.3 2.300h7.400l-1.600 2.300 1.600 2.300h-7.400" stroke="#1470c4" fill="none" stroke-width="1.3"/></svg>
<svg style="left:346.5px;top:48.5px" width="11" height="11" viewBox="0 0 12 12"><circle cx="6" cy="6" r="3.900" stroke="#1470c4" fill="none" stroke-width="1.3"/></svg>
<svg style="left:366.9px;top:48.5px" width="11" height="11" viewBox="0 0 12 12"><rect x="2" y="2" width="8" height="8" stroke="#1470c4" fill="none" stroke-width="1.3"/></svg>
<svg style="left:387.0px;top:48.5px" width="11" height="11" viewBox="0 0 12 12"><path d="M1.800 10V3.800l3.200 2 5.200-3.300V10z" stroke="#1470c4" fill="none" stroke-width="1.3"/></svg>
<svg style="left:407.0px;top:48.5px" width="11" height="11" viewBox="0 0 12 12"><path d="M3.500 3.300h5a1.800 1.800 0 0 1 0 3.600H3.800a1.700 1.700 0 0 0 0 3.400H8.500" stroke="#1470c4" fill="none" stroke-width="1.4"/><circle cx="2.600" cy="3.300" r="1.200" fill="#1470c4"/><circle cx="9.400" cy="10.300" r="1.200" fill="#1470c4"/></svg>
<svg style="left:427.0px;top:48.5px" width="11" height="11" viewBox="0 0 12 12"><circle cx="5.500" cy="5.500" r="3.400" stroke="#1470c4" fill="none" stroke-width="1.3"/><path d="M8 8l2.500 2.500" stroke="#1470c4" fill="none" stroke-width="1.4"/></svg>
<svg style="left:447.5px;top:48.5px" width="11" height="11" viewBox="0 0 12 12"><path d="M1.500 4.300V1.500H4.300M7.700 1.500h2.800V4.300M10.500 7.700v2.800H7.700M4.300 10.500H1.500V7.700" stroke="#1470c4" fill="none" stroke-width="1.4"/><path d="M2 2l2.800 2.800M10 2L7.200 4.800M10 10L7.200 7.200M2 10l2.800-2.800" stroke="#1470c4" fill="none" stroke-width="1.3"/></svg>
<svg style="left:467.5px;top:48.5px" width="11" height="11" viewBox="0 0 12 12"><path d="M2 1.500h5.800l2.700 2.700v6.300H2z" stroke="#1470c4" fill="none" stroke-width="1.3"/><path d="M2.500 10.500l2.300-3.500 1.600 1.800 1.300-1 2.300 2.700z" fill="#1470c4"/></svg>
<div style="left:585px;top:44.500px;width:193px;height:18px;background:#f6fafe;border:1px solid #dde4ea;border-radius:2px"></div>
<div class="t" style="left:592.500px;top:48.500px;font-size:10px;color:#8a8a8a">请输入要搜索的地址</div>
<div style="left:787px;top:45px;width:40px;height:17px;background:#0070c7;border-radius:1.500px"></div>
<div class="t" style="left:787px;width:40px;text-align:center;top:48px;font-size:9.4px;color:#fff">搜索</div>
<div style="left:843px;top:43px;width:116px;height:20.500px;background:#fff;border:1px solid #ccd8e6;border-radius:1px"></div>
<div class="t" style="left:849.500px;top:47.500px;font-size:7.6px;color:#222">百度地图</div>
<div class="tri" style="left:948px;top:52px;border-top-color:#666;border-left-width:2.500px;border-right-width:2.500px;border-top-width:3px"></div>

<!-- BOTTOM -->
<div id="stat"></div>
<div id="th"></div><div id="tr"></div><div id="tb"></div>
<div class="t" style="left:262.5px;top:443.700px;font-size:7.6px;font-weight:bold;word-spacing:1.5px;letter-spacing:0.3px;color:#22a02a">在线: 1</div>
<div class="t" style="left:296px;top:443.700px;font-size:7.6px;font-weight:bold;word-spacing:1.5px;letter-spacing:0.3px;color:#22a02a">行驶: 1</div>
<div class="t" style="left:329.5px;top:443.700px;font-size:7.6px;font-weight:500;word-spacing:1.5px;letter-spacing:0.3px;color:#868686">离线: 4</div>
<div class="t" style="left:363px;top:443.700px;font-size:7.6px;font-weight:bold;word-spacing:1.5px;letter-spacing:0.3px;color:#f02020">报警: 0</div>
<div class="t" style="left:396.2px;top:443.700px;font-size:7.6px;font-weight:500;word-spacing:1.5px;letter-spacing:0.3px;color:#4a4ae8">怠速: 0</div>
<div class="t" style="left:429.7px;top:443.700px;font-size:7.6px;font-weight:500;word-spacing:1.5px;letter-spacing:0.3px;color:#8aa028">停车: 0</div>
<div class="t" style="left:463px;top:443.700px;font-size:7.6px;font-weight:500;word-spacing:1.5px;letter-spacing:0.3px;color:#c07ae0">未定位: 0</div>
<svg style="left:897.2px;top:442.5px" width="12.5" height="12" viewBox="0 0 12.5 12"><path d="M3.500 1h5.500l2.800 5-2.800 5H3.500L0.700 6z" fill="none" stroke="#1273c8" stroke-width="1.500" stroke-linejoin="round"/><circle cx="6.250" cy="6" r="2.400" fill="none" stroke="#1273c8" stroke-width="1.200"/><path d="M5 7.200l2.500-2.500" stroke="#1273c8" stroke-width="1"/></svg>
<svg style="left:917.5px;top:443.0px" width="11" height="11" viewBox="0 0 11 11"><path d="M1 3.800V1h2.800M7.200 1H10v2.800M10 7.200V10H7.200M3.800 10H1V7.200" fill="none" stroke="#1273c8" stroke-width="1.700"/><path d="M1.500 1.500l2.800 2.800M9.500 1.500L6.700 4.300M9.500 9.500L6.700 6.700M1.500 9.500l2.800-2.800" fill="none" stroke="#1273c8" stroke-width="1.400"/></svg>
<svg style="left:937.5px;top:443.0px" width="11" height="11" viewBox="0 0 11 11"><path d="M1 1.500l4.500 4 4.500-4M1 5.500l4.500 4 4.500-4" fill="none" stroke="#1273c8" stroke-width="1.400"/></svg>
<div class="t" style="left:255.500px;top:465.700px;font-size:7.8px;color:#111;font-weight:500">时间</div>
<div style="left:335px;top:464px;width:1px;height:15px;background:#cfcfcf"></div>
<div class="t" style="left:339.500px;top:465.700px;font-size:7.8px;color:#111;font-weight:500">内容</div>
<div class="t" style="left:257px;top:489px;font-size:7.6px;letter-spacing:0.2px;color:#22962a">2022-07-05 10:42:52</div>
<div class="t" style="left:337.700px;top:489px;font-size:7.6px;color:#22962a">成功登录服务器</div>
<div style="left:963px;top:463px;width:3px;height:16px;background:#c8c8c8"></div>

<!-- RIGHT -->
<div id="right"></div>
<div class="rb" style="left:971px;width:15px"></div>
<svg style="left:974.0px;top:49.0px" width="9" height="9" viewBox="0 0 9 9"><path d="M1 6.500l3.500-3.500 3.500 3.500z" fill="#0a6fc6"/></svg>
<div class="rb" style="left:991px;width:15px"></div>
<svg style="left:994.0px;top:49.0px" width="9" height="9" viewBox="0 0 9 9"><path d="M1 3l3.500 3.500L8 3z" fill="#0a6fc6"/></svg>
<div class="rb" style="left:1011px;width:25px"></div>
<div style="left:1026px;top:47px;width:1px;height:13px;background:#e2e2e2"></div>
<svg style="left:1014.0px;top:49.0px" width="9" height="9" viewBox="0 0 9 9"><rect x="1" y="1.500" width="7" height="6.500" fill="#0a6fc6"/><rect x="4.500" y="4.500" width="3" height="3" fill="#fff"/></svg>
<div class="tri" style="left:1029px;top:52.500px;border-top-color:#0a6fc6;border-left-width:2px;border-right-width:2px;border-top-width:2.500px"></div>
<div class="rb" style="left:1041px;width:25px"></div>
<div style="left:1056px;top:47px;width:1px;height:13px;background:#e2e2e2"></div>
<svg style="left:1044.0px;top:49.0px" width="9" height="9" viewBox="0 0 9 9"><circle cx="4.500" cy="4.500" r="4" fill="#0a6fc6"/><path d="M5.500 2.500l-2 2.500 1 1 -1 0 2-2.500z" fill="#fff"/></svg>
<div class="tri" style="left:1059px;top:52.500px;border-top-color:#0a6fc6;border-left-width:2px;border-right-width:2px;border-top-width:2.500px"></div>
<div class="rb" style="left:1071px;width:25px"></div>
<div style="left:1086px;top:47px;width:1px;height:13px;background:#e2e2e2"></div>
<svg style="left:1074.0px;top:49.0px" width="9" height="9" viewBox="0 0 9 9"><path d="M0.500 2.500h2l0.800-1.200h2.400l0.800 1.200h2v5.500h-8z" fill="#0a6fc6"/><circle cx="4.500" cy="5" r="1.500" fill="#fff"/></svg>
<div class="tri" style="left:1089px;top:52.500px;border-top-color:#0a6fc6;border-left-width:2px;border-right-width:2px;border-top-width:2.500px"></div>
<div class="rb" style="left:1101px;width:25px"></div>
<div style="left:1116px;top:47px;width:1px;height:13px;background:#e2e2e2"></div>
<svg style="left:1104.0px;top:49.0px" width="9" height="9" viewBox="0 0 9 9"><path d="M1.500 0.800l6.500 3.700-6.500 3.700z" fill="#0a6fc6"/></svg>
<div class="tri" style="left:1119px;top:52.500px;border-top-color:#0a6fc6;border-left-width:2px;border-right-width:2px;border-top-width:2.500px"></div>
<div class="rb" style="left:1131px;width:25px"></div>
<div style="left:1146px;top:47px;width:1px;height:13px;background:#e2e2e2"></div>
<svg style="left:1134.0px;top:49.0px" width="9" height="9" viewBox="0 0 9 9"><rect x="1" y="1" width="7" height="7" fill="#0a6fc6"/></svg>
<div class="tri" style="left:1149px;top:52.500px;border-top-color:#0a6fc6;border-left-width:2px;border-right-width:2px;border-top-width:2.500px"></div>
<div class="rb" style="left:1161px;width:15px"></div>
<svg style="left:1163.5px;top:48.5px" width="10" height="10" viewBox="0 0 10 10"><path d="M1.500 4.500a3.600 3.600 0 0 1 6.800-1M8.500 5.500a3.600 3.600 0 0 1-6.800 1" fill="none" stroke="#0a6fc6" stroke-width="1.100"/><path d="M8.800 1.500v2.500h-2.500zM1.200 8.500v-2.500h2.500z" fill="#0a6fc6"/><circle cx="5" cy="5" r="1.200" fill="#0a6fc6"/></svg>
<div class="vh" style="top:66.7px;background:#0070c7;color:#fff;font-weight:normal;"><span class="t">1</span></div>
<div class="vv" style="top:83.0px;height:119.3px"><svg style="left:0;top:0" width="234.500" height="119" viewBox="0 0 234 119" preserveAspectRatio="none"><defs><linearGradient id="vg" x1="0" y1="0" x2="0" y2="1"><stop offset="0" stop-color="#0989e8"/><stop offset="0.25" stop-color="#0584e4"/><stop offset="0.55" stop-color="#0471d4"/><stop offset="0.8" stop-color="#035abc"/><stop offset="1" stop-color="#034fad"/></linearGradient><linearGradient id="sw1" x1="0" y1="0" x2="1" y2="0"><stop offset="0" stop-color="#52b8f6" stop-opacity="0"/><stop offset="0.35" stop-color="#52b8f6" stop-opacity="0.5"/><stop offset="1" stop-color="#52b8f6" stop-opacity="0.55"/></linearGradient><linearGradient id="sw2" x1="0" y1="0" x2="1" y2="0"><stop offset="0" stop-color="#5ab6f2" stop-opacity="0.6"/><stop offset="0.7" stop-color="#4aa6ea" stop-opacity="0.4"/><stop offset="1" stop-color="#4aa6ea" stop-opacity="0"/></linearGradient><filter id="bl" x="-5%" y="-5%" width="110%" height="110%"><feGaussianBlur stdDeviation="1.6"/></filter><filter id="bl2" x="-5%" y="-5%" width="110%" height="110%"><feGaussianBlur stdDeviation="0.9"/></filter></defs><rect width="234" height="119" fill="url(#vg)"/><g filter="url(#bl)"><path d="M128 -2C165 6 190 32 236 54V30C205 24 190 6 170 -2z" fill="url(#sw1)" opacity="0.55"/><path d="M160 -2C190 6 212 20 236 30V14C215 10 200 3 182 -2z" fill="url(#sw1)" opacity="0.6"/><path d="M0 57C40 68 72 98 108 121H92C70 108 40 82 0 70z" fill="url(#sw2)" opacity="0.6"/><path d="M0 83C40 86 75 104 104 121H84C60 110 30 98 0 97z" fill="url(#sw2)" opacity="0.55"/><path d="M0 99C40 102 75 110 98 121H70C50 114 25 108 0 108z" fill="url(#sw2)" opacity="0.45"/></g><g filter="url(#bl2)" opacity="0.9"><path d="M135 0C165 10 195 38 236 54" fill="none" stroke="#7cccfa" stroke-width="1.500" opacity="0.950"/><path d="M0 57C40 68 74 98 108 120" fill="none" stroke="#7cc8f8" stroke-width="1.500" opacity="1"/></g></svg></div>
<div class="vh" style="top:202.0px;background:#e8ecf5;color:#222;"><span class="t">2</span></div>
<div class="vv" style="top:218.3px;height:119.3px"><svg style="left:0;top:0" width="234.500" height="119" viewBox="0 0 234 119" preserveAspectRatio="none"><rect width="234" height="119" fill="url(#vg)"/><g filter="url(#bl)"><path d="M128 -2C165 6 190 32 236 54V30C205 24 190 6 170 -2z" fill="url(#sw1)" opacity="0.55"/><path d="M160 -2C190 6 212 20 236 30V14C215 10 200 3 182 -2z" fill="url(#sw1)" opacity="0.6"/><path d="M0 57C40 68 72 98 108 121H92C70 108 40 82 0 70z" fill="url(#sw2)" opacity="0.6"/><path d="M0 83C40 86 75 104 104 121H84C60 110 30 98 0 97z" fill="url(#sw2)" opacity="0.55"/><path d="M0 99C40 102 75 110 98 121H70C50 114 25 108 0 108z" fill="url(#sw2)" opacity="0.45"/></g><g filter="url(#bl2)" opacity="0.9"><path d="M135 0C165 10 195 38 236 54" fill="none" stroke="#7cccfa" stroke-width="1.500" opacity="0.950"/><path d="M0 57C40 68 74 98 108 120" fill="none" stroke="#7cc8f8" stroke-width="1.500" opacity="1"/></g></svg></div>
<div class="vh" style="top:337.3px;background:#e8ecf5;color:#222;"><span class="t">3</span></div>
<div class="vv" style="top:353.6px;height:119.3px"><svg style="left:0;top:0" width="234.500" height="119" viewBox="0 0 234 119" preserveAspectRatio="none"><rect width="234" height="119" fill="url(#vg)"/><g filter="url(#bl)"><path d="M128 -2C165 6 190 32 236 54V30C205 24 190 6 170 -2z" fill="url(#sw1)" opacity="0.55"/><path d="M160 -2C190 6 212 20 236 30V14C215 10 200 3 182 -2z" fill="url(#sw1)" opacity="0.6"/><path d="M0 57C40 68 72 98 108 121H92C70 108 40 82 0 70z" fill="url(#sw2)" opacity="0.6"/><path d="M0 83C40 86 75 104 104 121H84C60 110 30 98 0 97z" fill="url(#sw2)" opacity="0.55"/><path d="M0 99C40 102 75 110 98 121H70C50 114 25 108 0 108z" fill="url(#sw2)" opacity="0.45"/></g><g filter="url(#bl2)" opacity="0.9"><path d="M135 0C165 10 195 38 236 54" fill="none" stroke="#7cccfa" stroke-width="1.500" opacity="0.950"/><path d="M0 57C40 68 74 98 108 120" fill="none" stroke="#7cc8f8" stroke-width="1.500" opacity="1"/></g></svg></div>
<div class="vh" style="top:472.6px;background:#e8ecf5;color:#222;"><span class="t">4</span></div>
<div class="vv" style="top:488.9px;height:112px"><svg style="left:0;top:0" width="234.500" height="119" viewBox="0 0 234 119" preserveAspectRatio="none"><rect width="234" height="119" fill="url(#vg)"/><g filter="url(#bl)"><path d="M128 -2C165 6 190 32 236 54V30C205 24 190 6 170 -2z" fill="url(#sw1)" opacity="0.55"/><path d="M160 -2C190 6 212 20 236 30V14C215 10 200 3 182 -2z" fill="url(#sw1)" opacity="0.6"/><path d="M0 57C40 68 72 98 108 121H92C70 108 40 82 0 70z" fill="url(#sw2)" opacity="0.6"/><path d="M0 83C40 86 75 104 104 121H84C60 110 30 98 0 97z" fill="url(#sw2)" opacity="0.55"/><path d="M0 99C40 102 75 110 98 121H70C50 114 25 108 0 108z" fill="url(#sw2)" opacity="0.45"/></g><g filter="url(#bl2)" opacity="0.9"><path d="M135 0C165 10 195 38 236 54" fill="none" stroke="#7cccfa" stroke-width="1.500" opacity="0.950"/><path d="M0 57C40 68 74 98 108 120" fill="none" stroke="#7cc8f8" stroke-width="1.500" opacity="1"/></g></svg></div>
<div style="left:965.500px;top:82px;width:234.500px;height:120px;border:1px solid #62dba0;border-right:0"></div>
<div style="left:1197px;top:295px;width:3px;height:36px;background:#23384f;border-radius:1px 0 0 1px"></div>
<div style="left:1198px;top:306px;width:2px;height:18px;background:#5f9f86"></div>

<!-- DIALOG -->
<div id="dlg">
 <div id="dlgt"></div>
 <div class="t" style="left:18.500px;top:2px;color:#e8f1fa;font-size:7.5px">升级版本</div>
 <svg style="left:3px;top:3px" width="12" height="12" viewBox="0 0 12 12"><circle cx="6" cy="6" r="5" fill="#ddd"/><path d="M3 3h4l2 3-2 4H4l1-3z" fill="#222"/></svg>
 <svg style="left:308px;top:3px" width="12" height="12" viewBox="0 0 12 12"><path d="M1.5 1.5l9 9M10.500 1.5l-9 9" stroke="#fff" stroke-width="1.1" fill="none"/></svg>
 <div id="dlgb"></div>
 <div class="t" style="left:25px;top:28.400px;font-size:7.5px;color:#111;letter-spacing:0.08px">当前版本：CMSV6_WIN_7.30.0.1_20220701</div>
 <div class="t" style="left:25px;top:39.400px;font-size:7.5px;color:#111;letter-spacing:0.08px">最新版本：CMSV6_WIN_7.30.0.1_20220705</div>
 <div class="t" style="left:25px;top:60.600px;font-size:7.5px;color:#111">是否启动升级程序?</div>
 <div class="dbtn" style="left:78px">开始升级</div>
 <div class="dbtn" style="left:135px">忽略版本</div>
 <div class="dbtn" style="left:192px">下次升级</div>
</div>
</div>
</body>
</html>
